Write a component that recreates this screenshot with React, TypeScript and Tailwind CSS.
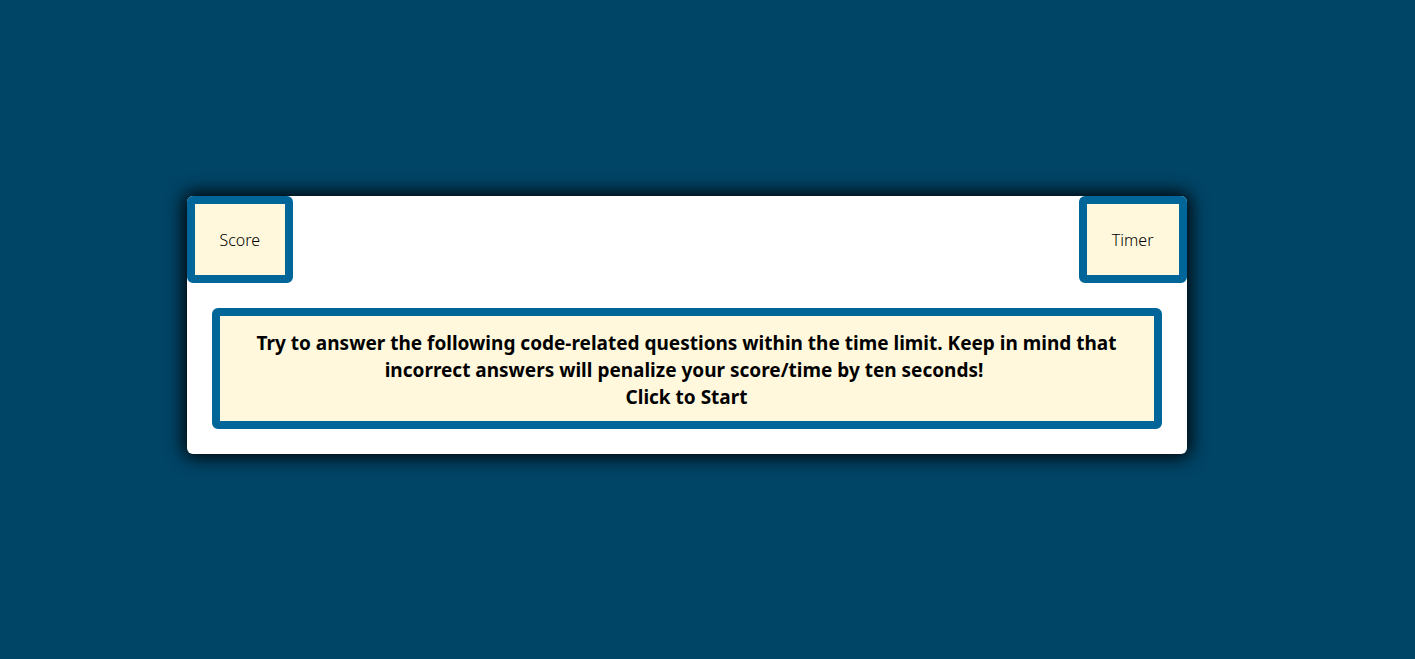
export default function App() {
  return (
    <main className="flex min-h-screen items-center justify-center bg-[#004466] pt-6 pr-[42px] pb-[34px] font-['Noto_Sans',sans-serif] text-black">
      <section className="w-full max-w-[1000px] rounded-md bg-white shadow-[0_0_18px_3px_#000000]">
        <header className="flex items-start justify-between">
          <div className="rounded-md border-8 border-[#006699] bg-[#fff8dc] px-[25px] pt-[25px] pb-[23px] text-base leading-[23px] font-light">Score</div>
          <div className="rounded-md border-8 border-[#006699] bg-[#fff8dc] px-[25px] pt-[25px] pb-[23px] text-base leading-[23px] font-light">Timer</div>
        </header>
        <div className="p-[25px]">
          <button type="button" className="block w-full rounded-md border-8 border-[#006699] bg-[#fff8dc] px-6 pt-[14px] pb-[10px] text-center text-[19px] leading-[27px] font-bold">
            Try to answer the following code-related questions within the time limit. Keep in mind that incorrect answers will penalize your score/time by ten seconds!&nbsp;
            <br />
            Click to Start
          </button>
        </div>
      </section>
    </main>
  );
}
